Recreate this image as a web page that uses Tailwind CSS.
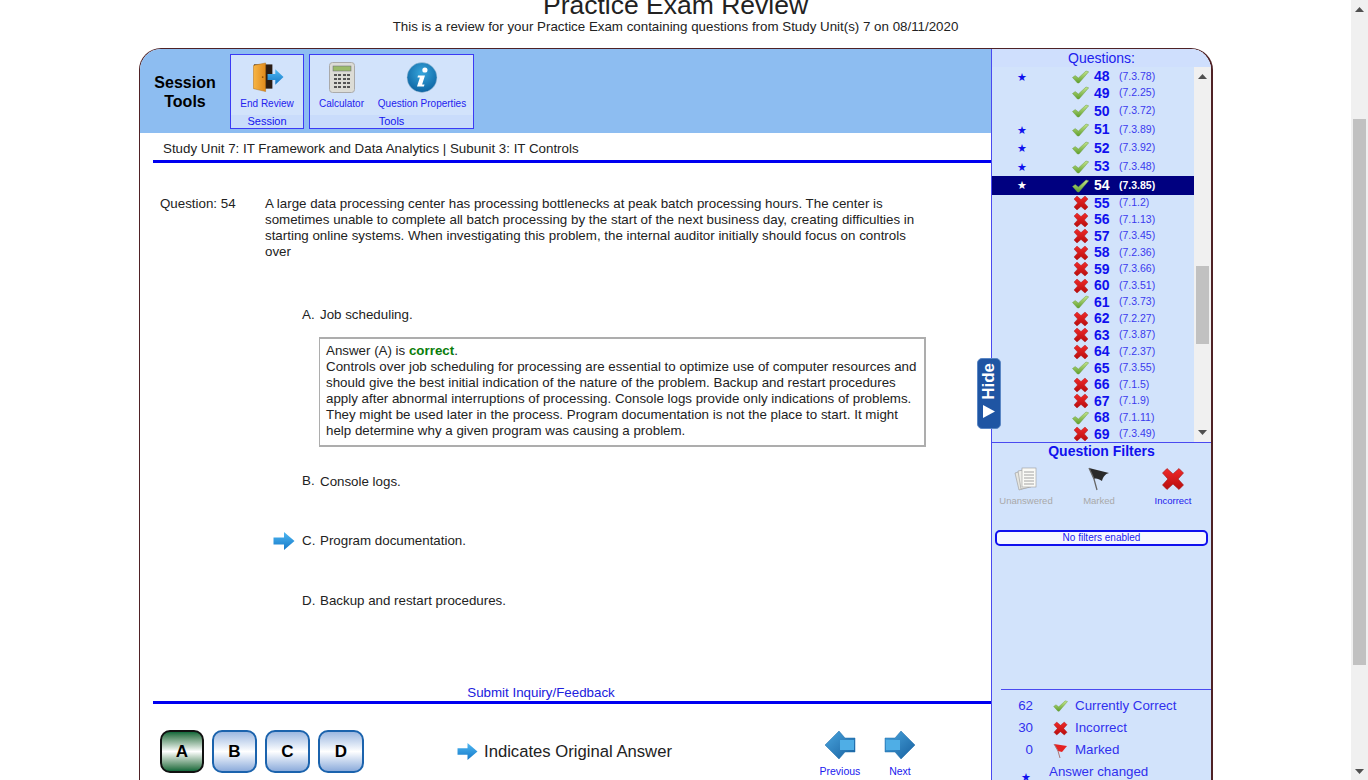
<!DOCTYPE html>
<html lang="en">
<head>
    <meta charset="UTF-8">
    <title>Practice Exam Review</title>
    <script src="https://cdn.jsdelivr.net/npm/@tailwindcss/browser@4"></script>
</head>
<body class="h-[780px] overflow-hidden bg-white font-['Liberation_Sans',sans-serif] text-[13.33px] text-[#222]">

    <!-- Shared icons -->
    <svg width="0" height="0" class="absolute">
        <defs>
            <linearGradient id="gCheck" x1="0" y1="0" x2="0" y2="1"><stop offset="0" stop-color="#c4e58c"/><stop offset="1" stop-color="#5f9f2c"/></linearGradient>
            <linearGradient id="gCross" x1="0" y1="0" x2="0" y2="1"><stop offset="0" stop-color="#f02a2a"/><stop offset="1" stop-color="#b80d0d"/></linearGradient>
            <linearGradient id="gArrow" x1="0" y1="0" x2="0" y2="1"><stop offset="0" stop-color="#4fb8f2"/><stop offset="1" stop-color="#1478c8"/></linearGradient>
            <linearGradient id="gNav" x1="0" y1="0" x2="1" y2="1"><stop offset="0" stop-color="#4aa5de"/><stop offset="1" stop-color="#17609f"/></linearGradient>
            <radialGradient id="gInfo" cx="0.5" cy="0.35" r="0.7"><stop offset="0" stop-color="#37a6dc"/><stop offset="1" stop-color="#0a5f9e"/></radialGradient>
            <linearGradient id="gDoor" x1="0" y1="0" x2="1" y2="0"><stop offset="0" stop-color="#f7b545"/><stop offset="1" stop-color="#e08a1c"/></linearGradient>
            <symbol id="check" viewBox="0 0 17 14"><path d="M0.5 7.5 L3.2 5.6 L6.4 8 L14 1 L16.7 1.8 L7 13 L5.5 13 Z" fill="url(#gCheck)" stroke="#6d9f45" stroke-width="0.5"/></symbol>
            <symbol id="cross" viewBox="0 0 16 16"><path d="M1 4 L4 1 L8 4.6 L12 1 L15 4 L11.4 8 L15 12 L12 15 L8 11.4 L4 15 L1 12 L4.6 8 Z" fill="url(#gCross)" stroke="#a31414" stroke-width="0.4" stroke-linejoin="round"/></symbol>
            <symbol id="arrowRight" viewBox="0 0 22 20"><path d="M0.5 6.5 H11 V1 L21.5 10 L11 19 V13.5 H0.5 Z" fill="url(#gArrow)"/></symbol>
        </defs>
    </svg>

    <div class="flex h-[780px]">
        <div class="w-[1351px] shrink-0">
            <!-- Page heading, top of it is scrolled away -->
            <div class="-mt-[10px] text-center">
                <h1 class="text-[26.5px] leading-[30px] font-normal text-[#222]">Practice Exam Review</h1>
                <p class="leading-[16px] -mt-[1px]">This is a review for your Practice Exam containing questions from Study Unit(s) 7 on 08/11/2020</p>
            </div>

            <!-- Main frame -->
            <div class="relative ml-[139px] mt-[13px] w-[1074px] h-[800px] flex rounded-t-[22px] border-t border-l border-r-2 border-[#4f2226] bg-white overflow-hidden">

                <!-- Left column -->
                <div class="w-[851px] shrink-0 flex flex-col">
                    <div class="h-[84px] bg-[#8dbdf1] flex pt-[5px]">
                        <div class="w-[90px] pt-[19px] text-center text-[16px] leading-[19px] font-bold text-black">Session<br>Tools</div>
                        <div class="w-[74px] h-[75px] border border-[#3b3bf5] bg-[#d2e3fb] flex flex-col">
                            <div class="flex-1 flex flex-col items-center pt-[7px]">
                                <svg class="ml-[2px]" width="31" height="31" viewBox="0 0 32 31">
                                    <rect x="1" y="2" width="19" height="25" fill="#2a1c14"/>
                                    <path d="M0.5 3 L13 0.5 V30 L0.5 27 Z" fill="url(#gDoor)" stroke="#b06d12" stroke-width="0.5"/>
                                    <circle cx="10" cy="15" r="0.9" fill="#8a4c08"/>
                                    <path d="M15 12 H23 V7 L31.5 15 L23 23 V18 H15 Z" fill="url(#gArrow)"/>
                                </svg>
                                <span class="mt-[5px] text-[10px] leading-[12px] text-[#2222ee]">End Review</span>
                            </div>
                            <div class="h-[13px] bg-[#c9dcfb] text-center text-[11px] leading-[13px] text-[#1414ee]">Session</div>
                        </div>
                        <div class="ml-[5px] w-[165px] h-[75px] border border-[#3b3bf5] bg-[#d2e3fb] flex flex-col">
                            <div class="flex-1 flex">
                                <div class="w-[63px] flex flex-col items-center pt-[7px]">
                                    <svg width="26" height="31" viewBox="0 0 26 31">
                                        <rect x="0.5" y="0.5" width="25" height="30" rx="3" fill="#dcdcd6" stroke="#aaa"/>
                                        <rect x="4" y="4" width="18" height="5" fill="#9bbb6a" stroke="#667" stroke-width="0.5"/>
                                        <g fill="#555"><rect x="5" y="12" width="3" height="2"/><rect x="9" y="12" width="3" height="2"/><rect x="14" y="12" width="3" height="2"/><rect x="18" y="12" width="3" height="2"/><rect x="5" y="16" width="3" height="2"/><rect x="9" y="16" width="3" height="2"/><rect x="14" y="16" width="3" height="2"/><rect x="18" y="16" width="3" height="2"/><rect x="5" y="20" width="3" height="2"/><rect x="9" y="20" width="3" height="2"/><rect x="14" y="20" width="3" height="2"/><rect x="18" y="20" width="3" height="2"/><rect x="5" y="24" width="3" height="2"/><rect x="9" y="24" width="3" height="2"/><rect x="14" y="24" width="3" height="2"/><rect x="18" y="24" width="3" height="2"/></g>
                                    </svg>
                                    <span class="mt-[5px] text-[10px] leading-[12px] text-[#2222ee]">Calculator</span>
                                </div>
                                <div class="w-[98px] flex flex-col items-center pt-[7px]">
                                    <svg width="32" height="31" viewBox="0 0 31 31">
                                        <circle cx="15.5" cy="15.5" r="15" fill="url(#gInfo)" stroke="#bcd" stroke-width="0.5"/>
                                        <circle cx="18.4" cy="8" r="2.6" fill="#fff"/>
                                        <path d="M11.5 13.5 H18.5 L15.6 22.5 H18 L17.4 24.5 H10.5 L13.4 15.5 H11 Z" fill="#fff"/>
                                    </svg>
                                    <span class="mt-[5px] text-[10px] leading-[12px] text-[#2222ee]">Question Properties</span>
                                </div>
                            </div>
                            <div class="h-[13px] bg-[#c9dcfb] text-center text-[11px] leading-[13px] text-[#1414ee]">Tools</div>
                        </div>
                    </div>

                    <div class="ml-[13px] h-[30px] border-b-[3px] border-[#0000f0] pl-[10px] pt-[8px] leading-[16px]">Study Unit 7: IT Framework and Data Analytics | Subunit 3: IT Controls</div>

                    <!-- Question -->
                    <div class="flex pl-[20px] pt-[33px] leading-[16px]">
                        <div class="w-[105px] shrink-0">Question: 54</div>
                        <p class="w-[650px]">A large data processing center has processing bottlenecks at peak batch processing hours. The center is sometimes unable to complete all batch processing by the start of the next business day, creating difficulties in starting online systems. When investigating this problem, the internal auditor initially should focus on controls over</p>
                    </div>

                    <!-- Choices -->
                    <div class="pl-[162px] mt-[47px] leading-[16px]">
                        <div class="flex"><span class="w-[18px]">A.</span><span>Job scheduling.</span></div>
                        <div class="mt-[14px] ml-[17px] w-[607px] h-[110px] border-[2px] border-l border-[#adadad] px-[6px] pt-[4px]">
                            Answer (A) is <b class="text-[#0a7d0a] font-bold">correct</b>.<br>
                            Controls over job scheduling for processing are essential to optimize use of computer resources and should give the best initial indication of the nature of the problem. Backup and restart procedures apply after abnormal interruptions of processing. Console logs provide only indications of problems. They might be used later in the process. Program documentation is not the place to start. It might help determine why a given program was causing a problem.
                        </div>
                        <div class="flex mt-[27px]"><span class="w-[18px] -mt-[1px]">B.</span><span>Console logs.</span></div>
                        <div class="relative flex mt-[43px]">
                            <svg class="absolute -left-[29px] top-[-2px]" width="22" height="20"><use href="#arrowRight"/></svg>
                            <span class="w-[18px]">C.</span><span>Program documentation.</span>
                        </div>
                        <div class="flex mt-[44px]"><span class="w-[18px]">D.</span><span>Backup and restart procedures.</span></div>
                    </div>

                    <div class="mt-[76px] ml-[13px] w-[776px] text-center leading-[16px] text-[#2020dd]">Submit Inquiry/Feedback</div>
                    <div class="ml-[13px] h-[3px] bg-[#0000f0]"></div>

                    <!-- Answer buttons and navigation -->
                    <div class="flex pt-[26px] pl-[20px]">
                        <div class="flex gap-[8px]">
                            <div class="w-[44px] h-[43px] rounded-[10px] border-2 border-[#111] bg-linear-to-b from-[#0e6a3c] via-white to-[#0e6a3c] flex items-center justify-center text-[17px] font-bold text-black">A</div>
                            <div class="w-[45px] h-[43px] rounded-[10px] border-2 border-[#1b63ad] bg-linear-to-b from-[#9db8e0] via-white to-[#8dacdb] flex items-center justify-center text-[17px] font-bold text-black">B</div>
                            <div class="w-[45px] h-[43px] rounded-[10px] border-2 border-[#1b63ad] bg-linear-to-b from-[#9db8e0] via-white to-[#8dacdb] flex items-center justify-center text-[17px] font-bold text-black">C</div>
                            <div class="w-[46px] h-[43px] rounded-[10px] border-2 border-[#1b63ad] bg-linear-to-b from-[#9db8e0] via-white to-[#8dacdb] flex items-center justify-center text-[17px] font-bold text-black">D</div>
                        </div>
                        <div class="ml-[93px] flex items-center h-[43px]">
                            <svg width="21" height="19"><use href="#arrowRight"/></svg>
                            <span class="ml-[6px] text-[16.67px] leading-[20px] text-[#222]">Indicates Original Answer</span>
                        </div>
                        <div class="ml-[138px] flex">
                            <div class="w-[60px] flex flex-col items-center">
                                <svg width="32" height="30" viewBox="0 0 32 30"><path d="M1 15 L15 1 L21 8 H31 V22 H21 L15 29 Z" fill="url(#gNav)" stroke="#1a6aa8" stroke-width="0.5"/><rect x="16" y="10" width="14" height="10" fill="#4faee6"/></svg>
                                <span class="mt-[5px] text-[10.5px] leading-[12px] text-[#2020ee]">Previous</span>
                            </div>
                            <div class="w-[60px] flex flex-col items-center">
                                <svg width="32" height="30" viewBox="0 0 32 30"><path d="M31 15 L17 1 L11 8 H1 V22 H11 L17 29 Z" fill="url(#gNav)" stroke="#1a6aa8" stroke-width="0.5"/><rect x="2" y="10" width="14" height="10" fill="#4faee6"/></svg>
                                <span class="mt-[5px] text-[10.5px] leading-[12px] text-[#2020ee]">Next</span>
                            </div>
                        </div>
                    </div>
                </div>

                <!-- Right column -->
                <div class="flex-1 border-l border-[#4a4af0] bg-[#d2e3fb] flex flex-col text-[#2020ee]">
                    <div class="h-[18px] bg-[#cfdffd] text-center text-[14px] leading-[18px]">Questions:</div>
                    <div class="h-[376px] shrink-0 flex overflow-hidden border-b border-[#4a4af0]">
                        <div id="questionList" class="w-[202px] shrink-0 pt-[1.5px]"></div>
                        <div class="w-[17px] bg-[#f0f0f0] flex flex-col items-center">
                            <svg class="mt-[7px]" width="9" height="5"><path d="M0 5 L4.5 0 L9 5 Z" fill="#505050"/></svg>
                            <div class="w-[13px] h-[78px] mt-[187px] bg-[#c1c1c1]"></div>
                            <svg class="mt-[86px]" width="9" height="5"><path d="M0 0 L4.5 5 L9 0 Z" fill="#505050"/></svg>
                        </div>
                    </div>

                    <div class="text-center text-[14px] leading-[16px] font-bold text-[#1010ee]">Question Filters</div>
                    <div class="flex mt-[8px]">
                        <div class="w-[72px] -ml-[2px] flex flex-col items-center text-[#a9a9a9]">
                            <svg width="24" height="24" viewBox="0 0 24 24">
                                <path d="M1 6 L11 3 L15 20 L5 23 Z" fill="#e6e6e0" stroke="#999" stroke-width="0.6"/>
                                <path d="M4 4 L14 2 L17 20 L7 22 Z" fill="#eeeeea" stroke="#999" stroke-width="0.6"/>
                                <rect x="8" y="1" width="14" height="19" fill="#fafaf6" stroke="#999" stroke-width="0.6"/>
                                <path d="M10 5 H20 M10 8 H20 M10 11 H20 M10 14 H20 M10 17 H20" stroke="#999" stroke-width="0.9"/>
                            </svg>
                            <span class="mt-[4px] text-[9.5px] leading-[12px]">Unanswered</span>
                        </div>
                        <div class="w-[74px] flex flex-col items-center text-[#a9a9a9]">
                            <svg width="24" height="24" viewBox="0 0 24 24">
                                <path d="M2 1 L22 6 C18 7 16 10 15 14 C12 12 9 11 7 12 Z" fill="#2a2a2a"/>
                                <path d="M2 1 L7 12 L10 23" fill="none" stroke="#666" stroke-width="1.3"/>
                            </svg>
                            <span class="mt-[4px] text-[9.5px] leading-[12px]">Marked</span>
                        </div>
                        <div class="w-[74px] flex flex-col items-center text-[#2020ee]">
                            <svg width="24" height="24"><use href="#cross"/></svg>
                            <span class="mt-[4px] text-[9.5px] leading-[12px]">Incorrect</span>
                        </div>
                    </div>
                    <div class="mt-[23px] mx-[3px] h-[16px] rounded-[5px] border-2 border-[#1010ee] bg-[#f6f7ff] text-center text-[10px] leading-[12px] text-[#1a1aee]">No filters enabled</div>

                    <!-- Totals -->
                    <div class="mt-[143px] ml-[9px] border-t border-[#4a4af0] pt-[5px] leading-[16px] text-[#3030ee]">
                        <div class="flex items-center h-[22px]">
                            <span class="w-[32px] text-right">62</span>
                            <svg class="ml-[20px]" width="15" height="12"><use href="#check"/></svg>
                            <span class="ml-[7px]">Currently Correct</span>
                        </div>
                        <div class="flex items-center h-[22px]">
                            <span class="w-[32px] text-right">30</span>
                            <svg class="ml-[20px]" width="15" height="15"><use href="#cross"/></svg>
                            <span class="ml-[7px]">Incorrect</span>
                        </div>
                        <div class="flex items-center h-[22px]">
                            <span class="w-[32px] text-right">0</span>
                            <svg class="ml-[20px]" width="15" height="15" viewBox="0 0 15 15"><path d="M1 1 L14 3 L9 9 L5 8 Z" fill="#e52323"/><path d="M1 1 L5 8 L7 15" fill="none" stroke="#a77" stroke-width="1"/></svg>
                            <span class="ml-[7px]">Marked</span>
                        </div>
                        <div class="flex h-[22px] pt-[3px]">
                            <span class="w-[48px] pl-[20px] pt-[6px] text-[11px] text-[#1010ee] font-['DejaVu_Sans',sans-serif]">★</span>
                            <span>Answer changed</span>
                        </div>
                    </div>
                </div>

                <!-- Hide tab overlaps the column edge -->
                <div class="absolute left-[837px] top-[309px] w-[24px] h-[71px] rounded-[5px] bg-[#1f55a3] border border-[#5a86c4] flex flex-col items-center pt-[4px] gap-[4px]">
                    <span class="[writing-mode:vertical-rl] rotate-180 text-white font-bold text-[17px] leading-[20px]">Hide</span>
                    <svg width="14" height="15"><path d="M1 1 L13 7.5 L1 14 Z" fill="#fff"/></svg>
                </div>
            </div>
        </div>

        <!-- Page scrollbar -->
        <div class="w-[17px] bg-[#f0f0f0] flex flex-col items-center">
            <svg class="mt-[7px]" width="9" height="5"><path d="M0 5 L4.5 0 L9 5 Z" fill="#505050"/></svg>
            <div class="w-[13px] h-[546px] mt-[107px] bg-[#c1c1c1]"></div>
            <svg class="mt-[104px]" width="9" height="5"><path d="M0 0 L4.5 5 L9 0 Z" fill="#505050"/></svg>
        </div>
    </div>

    <script>
        // Question list: number, reference, starred, correct, row height class
        const questions = [
            [48, '7.3.78', 1, 1, 'h-[16.5px]'], [49, '7.2.25', 0, 1, 'h-[16.5px]'], [50, '7.3.72', 0, 1, 'h-[19px]'],
            [51, '7.3.89', 1, 1, 'h-[18.5px]'], [52, '7.3.92', 1, 1, 'h-[18.5px]'], [53, '7.3.48', 1, 1, 'h-[18.5px]'],
            [54, '7.3.85', 1, 1, 'h-[19px]'], [55, '7.1.2', 0, 0, 'h-[16.5px]'], [56, '7.1.13', 0, 0, 'h-[16.5px]'],
            [57, '7.3.45', 0, 0, 'h-[16.5px]'], [58, '7.2.36', 0, 0, 'h-[16.5px]'], [59, '7.3.66', 0, 0, 'h-[16.5px]'],
            [60, '7.3.51', 0, 0, 'h-[16.5px]'], [61, '7.3.73', 0, 1, 'h-[16.5px]'], [62, '7.2.27', 0, 0, 'h-[16.5px]'],
            [63, '7.3.87', 0, 0, 'h-[16.5px]'], [64, '7.2.37', 0, 0, 'h-[16.5px]'], [65, '7.3.55', 0, 1, 'h-[16.5px]'],
            [66, '7.1.5', 0, 0, 'h-[16.5px]'], [67, '7.1.9', 0, 0, 'h-[16.5px]'], [68, '7.1.11', 0, 1, 'h-[16.5px]'],
            [69, '7.3.49', 0, 0, 'h-[16.5px]']
        ];
        const list = document.getElementById('questionList');
        list.innerHTML = questions.map(([num, ref, star, ok, height]) => {
            const current = num === 54;
            const rowColor = current ? 'bg-[#000080] text-white' : 'text-[#1010ee]';
            const refColor = current ? 'text-white font-bold' : 'text-[#3a3aee]';
            const icon = ok ? '<svg width="17" height="14"><use href="#check"/></svg>' : '<svg width="16" height="16"><use href="#cross"/></svg>';
            return `<div class="flex items-center ${height} ${rowColor}">
                <span class="w-[60px] text-center pt-[2px] text-[11px] font-['DejaVu_Sans',sans-serif]">${star ? '★' : ''}</span>
                <span class="ml-[20px] w-[17px] flex justify-center">${icon}</span>
                <span class="ml-[5px] w-[25px] text-[14px] font-semibold">${num}</span>
                <span class="text-[10.5px] ${refColor}">(${ref})</span>
            </div>`;
        }).join('');
    </script>
</body>
</html>
